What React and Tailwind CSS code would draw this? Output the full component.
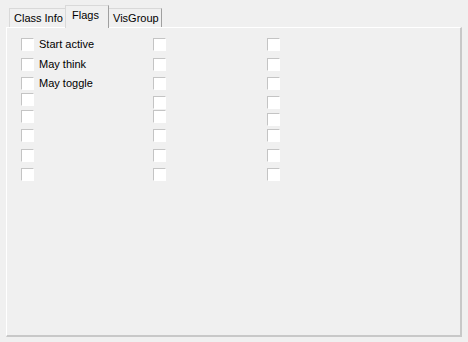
const font = { fontFamily: '"Liberation Sans", Arial, sans-serif' };

const Box = ({ className = '' }) => (
  <div
    className={`w-[13px] h-[13px] bg-white border-t border-l border-[#c4c4c4] border-r border-b border-r-white border-b-white ${className}`}
  />
);

// top offsets (px) of each checkbox in a column, measured from the panel area
const col1 = [
  { mt: 'mt-0', label: 'Start active' },
  { mt: 'mt-[7px]', label: 'May think' },
  { mt: 'mt-[6px]', label: 'May toggle' },
  { mt: 'mt-[3px]' },
  { mt: 'mt-[4px]' },
  { mt: 'mt-[6px]' },
  { mt: 'mt-[7px]' },
  { mt: 'mt-[6px]' },
];
const col2 = ['mt-0', 'mt-[7px]', 'mt-[6px]', 'mt-[6px]', 'mt-[1px]', 'mt-[6px]', 'mt-[7px]', 'mt-[6px]'];
const col3 = ['mt-0', 'mt-[7px]', 'mt-[6px]', 'mt-[6px]', 'mt-[4px]', 'mt-[3px]', 'mt-[7px]', 'mt-[6px]'];

export default function App() {
  return (
    <div className="w-[468px] h-[342px] bg-[#f0f0f0] pt-[5px] pl-[6px] text-[11px] text-black" style={font}>
      {/* tab strip */}
      <div className="flex items-end pl-[3px] h-[22px] relative z-10">
        <div className="h-[19px] w-[56px] pl-[4px] pt-[3px] border-t border-l border-[#d9d9d9] bg-[#f0f0f0] leading-[13px]">
          Class Info
        </div>
        <div className="h-[23px] w-[44px] -mb-[1px] pl-[6px] pt-[3px] border-t border-l border-r border-[#d9d9d9] border-r-[#a0a0a0] bg-[#f0f0f0] leading-[13px]">
          Flags
        </div>
        <div className="h-[19px] w-[53px] pl-[4px] pt-[3px] border-t border-r border-[#d9d9d9] border-r-[#a0a0a0] bg-[#f0f0f0] leading-[13px]">
          VisGroup
        </div>
      </div>
      {/* panel */}
      <div className="w-[456px] h-[310px] border-t border-l border-white border-r-2 border-b-2 border-r-[#c8c8c8] border-b-[#c8c8c8] pt-[10px] pl-[14px] flex">
        <div className="w-[132px] flex flex-col">
          {col1.map((c, i) => (
            <div key={i} className={`flex items-center h-[13px] ${c.mt}`}>
              <Box />
              {c.label && <span className="ml-[5px] leading-[13px]">{c.label}</span>}
            </div>
          ))}
        </div>
        <div className="w-[114px] flex flex-col">
          {col2.map((m, i) => (
            <Box key={i} className={m} />
          ))}
        </div>
        <div className="flex flex-col">
          {col3.map((m, i) => (
            <Box key={i} className={m} />
          ))}
        </div>
      </div>
    </div>
  );
}
